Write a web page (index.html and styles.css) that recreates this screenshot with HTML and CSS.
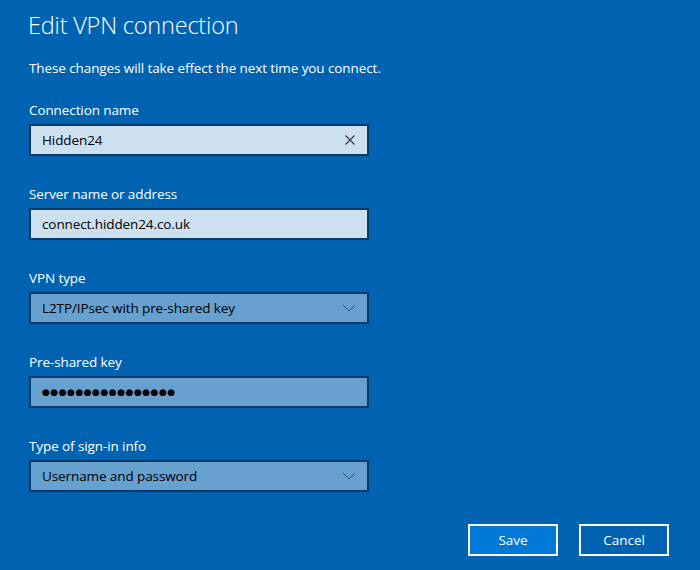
FILE: index.html
```html
<!DOCTYPE html>
<html>
<head>
<meta charset="utf-8">
<link rel="stylesheet" href="styles.css">
</head>
<body>
<div class="dialog">
  <h1 class="title">Edit VPN connection</h1>
  <p class="subtitle">These changes will take effect the next time you connect.</p>

  <div class="field">
    <div class="label">Connection name</div>
    <div class="box light">
      <span class="value">Hidden24</span>
      <svg class="icon" width="12" height="12" viewBox="0 0 12 12"><path d="M1.5 1.5 L10.5 10.5 M10.5 1.5 L1.5 10.5" stroke="#333" stroke-width="1.1" fill="none"/></svg>
    </div>
  </div>

  <div class="field">
    <div class="label">Server name or address</div>
    <div class="box light">
      <span class="value">connect.hidden24.co.uk</span>
    </div>
  </div>

  <div class="field">
    <div class="label">VPN type</div>
    <div class="box mid">
      <span class="value">L2TP/IPsec with pre-shared key</span>
      <svg class="icon" width="14" height="8" viewBox="0 0 14 8"><path d="M1 1 L7 7 L13 1" stroke="#2c4a66" stroke-width="1" fill="none"/></svg>
    </div>
  </div>

  <div class="field">
    <div class="label">Pre-shared key</div>
    <div class="box mid">
      <span class="value dots">●●●●●●●●●●●●●●●●</span>
    </div>
  </div>

  <div class="field">
    <div class="label">Type of sign-in info</div>
    <div class="box mid">
      <span class="value">Username and password</span>
      <svg class="icon" width="14" height="8" viewBox="0 0 14 8"><path d="M1 1 L7 7 L13 1" stroke="#2c4a66" stroke-width="1" fill="none"/></svg>
    </div>
  </div>

  <div class="actions">
    <button class="btn primary">Save</button>
    <button class="btn">Cancel</button>
  </div>
</div>
</body>
</html>
```

FILE: styles.css
```css
html, body {
  margin: 0;
  padding: 0;
  background: #0063b1;
  height: 100%;
}
body {
  font-family: "Open Sans", "Noto Sans", sans-serif;
  color: #ffffff;
}
.dialog {
  padding: 9px 31px 0 29px;
  width: 640px;
}
.title {
  margin: 0;
  font-size: 23.5px;
  font-weight: 300;
  line-height: 32px;
  margin-left: -1px;
  letter-spacing: -0.2px;
}
.subtitle {
  margin: 17px 0 22px 0;
  font-size: 13.5px;
  line-height: 20px;
  letter-spacing: -0.1px;
}
.field {
  margin-bottom: 28px;
}
.label {
  font-size: 13.5px;
  line-height: 20px;
  margin-bottom: 4px;
  letter-spacing: -0.1px;
}
.box {
  box-sizing: border-box;
  width: 340px;
  height: 32px;
  border: 2px solid #0b3a66;
  display: flex;
  align-items: center;
  justify-content: space-between;
  padding: 0 11px 0 11px;
  color: #000000;
  font-size: 13.5px;
}
.box.light {
  background: #cce0f0;
}
.box.mid {
  background: #66a1d0;
}
.value {
  letter-spacing: -0.1px;
}
.dots {
  font-family: "DejaVu Sans", sans-serif;
  font-size: 9px;
  letter-spacing: 0.5px;
}
.icon {
  display: block;
}
.actions {
  display: flex;
  justify-content: flex-end;
  gap: 21px;
  margin-top: 32px;
}
.btn {
  box-sizing: border-box;
  width: 90px;
  height: 32px;
  border: 2px solid #ffffff;
  background: #0063b1;
  color: #ffffff;
  font-family: "Open Sans", "Noto Sans", sans-serif;
  font-size: 13.5px;
  padding: 0;
}
.btn.primary {
  background: #0078d7;
}
```
